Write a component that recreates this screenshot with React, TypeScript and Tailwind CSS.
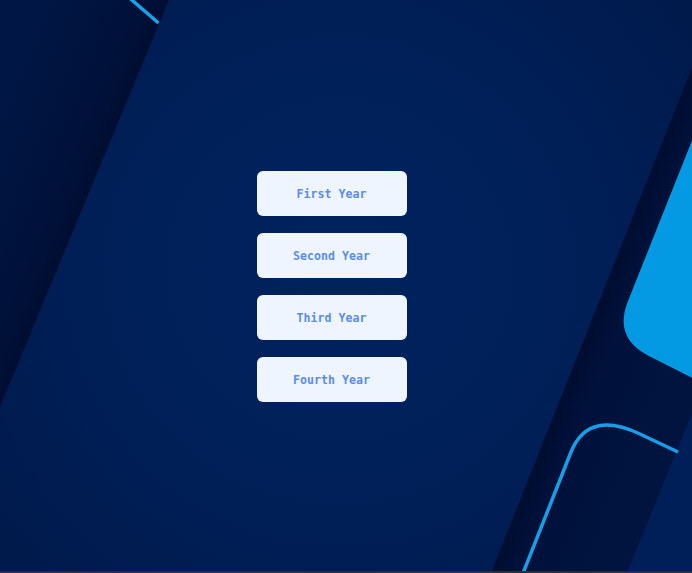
import React from "react";

const years = ["First Year", "Second Year", "Third Year", "Fourth Year"];

function Backdrop() {
  return (
    <svg
      className="absolute inset-0 h-full w-full"
      viewBox="0 0 692 571"
      preserveAspectRatio="none"
      aria-hidden="true"
    >
      <defs>
        <radialGradient id="base" cx="340" cy="270" r="420" gradientUnits="userSpaceOnUse">
          <stop offset="0" stopColor="#00235e" />
          <stop offset="0.6" stopColor="#001f57" />
          <stop offset="1" stopColor="#001a4c" />
        </radialGradient>
        <linearGradient id="leftShade" x1="85" y1="204" x2="-26" y2="158" gradientUnits="userSpaceOnUse">
          <stop offset="0" stopColor="#000d31" />
          <stop offset="0.2" stopColor="#001139" />
          <stop offset="1" stopColor="#001644" />
        </linearGradient>
        <linearGradient id="bandShade" x1="600" y1="300" x2="693" y2="337" gradientUnits="userSpaceOnUse">
          <stop offset="0" stopColor="#000d31" />
          <stop offset="0.25" stopColor="#00113a" />
          <stop offset="1" stopColor="#00143f" />
        </linearGradient>
      </defs>
      <rect x="0" y="0" width="692" height="571" fill="url(#base)" />
      <polygon points="-5,-5 171,-5 169,0 0,407 -5,420" fill="url(#leftShade)" />
      <path d="M118 -12 L158.5 23" stroke="#18a2ea" strokeWidth="3.5" fill="none" />
      <polygon points="719,0 861,0 627,573 491,573" fill="url(#bandShade)" />
      <polygon points="861,0 900,0 900,573 627,573" fill="#001f58" />
      <path
        d="M760 -30 L628 301 Q613 338 649 356 L760 412 Z"
        fill="#0499e3"
      />
      <path
        d="M514 596 L571 452 C584 420 610 420 640 434 L678 452"
        stroke="#169fe8"
        strokeWidth="3.5"
        fill="none"
      />
    </svg>
  );
}

export default function App() {
  return (
    <div className="w-full bg-[#001f57]">
      <div className="relative h-[571px] w-full overflow-hidden">
        <Backdrop />
        <div className="relative flex h-full w-full flex-col items-center justify-center gap-[16.7px] pr-[29px] pt-[2px]">
          {years.map((y) => (
            <button
              key={y}
              className="flex h-[45.3px] w-[150px] items-center justify-center rounded-md bg-[#eff5fe] pt-[2px] text-[11.6px] font-bold leading-none text-[#5a8de6]"
              style={{ fontFamily: '"DejaVu Sans Mono", "Liberation Mono", monospace' }}
            >
              {y}
            </button>
          ))}
        </div>
      </div>
      <div className="h-[2px] w-full bg-[#2a2e37]" />
    </div>
  );
}
